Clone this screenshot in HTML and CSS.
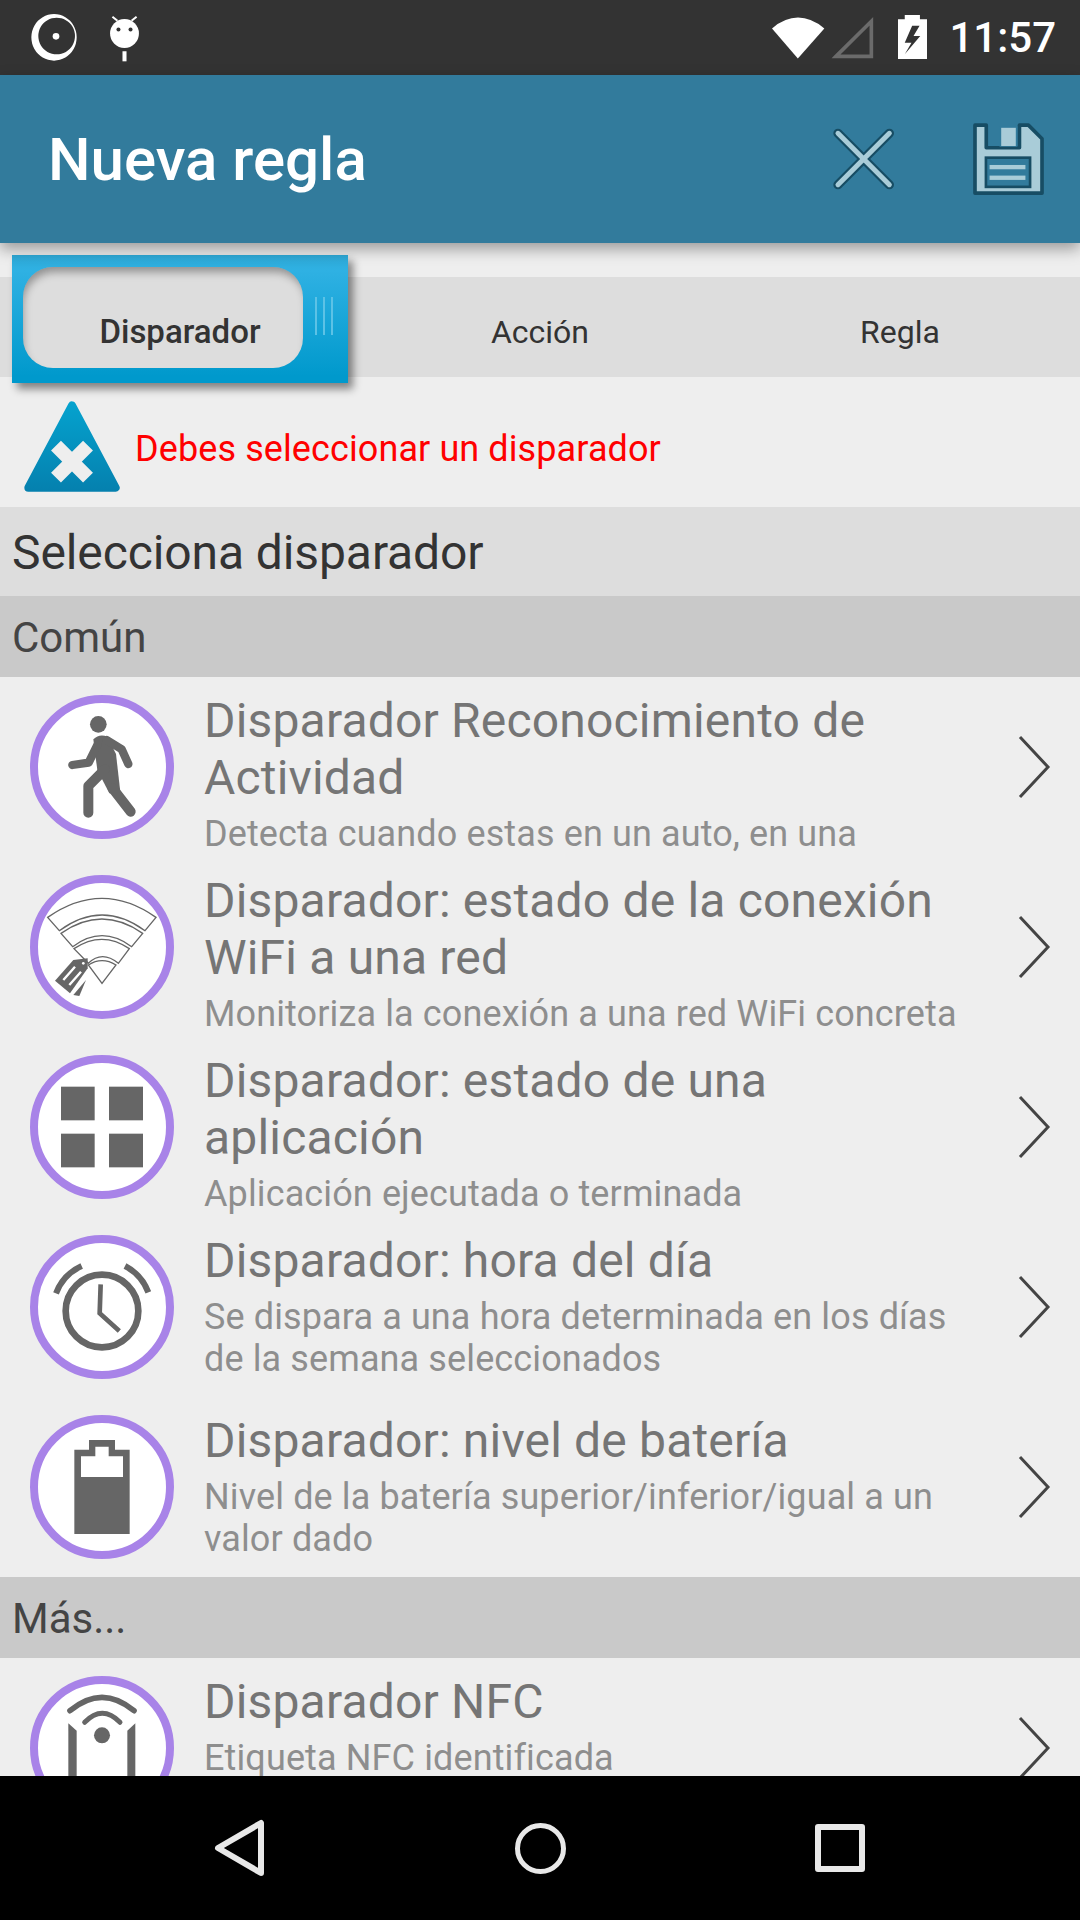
FILE: index.html
```html
<!DOCTYPE html>
<html lang="es">
<head>
  <meta charset="UTF-8">
  <meta name="viewport" content="width=device-width, initial-scale=1.0">
  <title>Nueva regla</title>
  <link rel="stylesheet" href="styles.css">
</head>
<body>
<div class="phone">

  <div class="status-bar">
    <svg class="st-ring" viewBox="88 43 138 141"><path fill="#fff" fill-rule="evenodd" d="M157 43a68 70 0 1 0 .1 0zM165 54a55 55 0 1 1-.1 0z"/><circle cx="163" cy="110" r="10" fill="#fff"/></svg>
    <svg class="st-bug" viewBox="320 45 92 140"><ellipse cx="366" cy="100" rx="43" ry="43" fill="#fff"/><path d="M330 50l15 12M402 50l-15 12" stroke="#fff" stroke-width="6"/><circle cx="348" cy="88" r="6" fill="#333"/><circle cx="384" cy="88" r="6" fill="#333"/><rect x="360" y="153" width="12" height="30" fill="#fff"/></svg>
    <div class="spacer"></div>
    <svg class="st-wifi" viewBox="220 45 160 132"><path fill="#fff" d="M220 85Q298 20 378 85L298 176Z"/></svg>
    <svg class="st-signal" viewBox="395 50 130 128"><path fill="none" stroke="#6b6b6b" stroke-width="11" d="M410 171L517 65V171Z"/></svg>
    <svg class="st-batt" viewBox="598 46 86 130"><path fill="#fff" d="M598 58H618V46H663V58H684V176H598Z"/><path fill="#333" d="M640 78L618 128H638L618 162L664 108H644L662 78Z"/></svg>
    <span class="st-time">11:57</span>
  </div>

  <div class="app-bar">
    <h1 class="app-title">Nueva regla</h1>
    <svg class="btn-close" viewBox="400 385 190 185"><path d="M415 400L570 555M570 400L415 555" stroke="#174d64" stroke-width="28" stroke-linecap="round"/><path d="M415 400L570 555M570 400L415 555" stroke="#a9ccd8" stroke-width="15" stroke-linecap="round"/></svg>
    <svg class="btn-save" viewBox="815 368 220 222"><path fill="#a9ccd8" stroke="#174d64" stroke-width="11" stroke-linejoin="round" d="M824 377H858V445H958V377H985L1026 418V582H824Z"/><rect x="898" y="380" width="54" height="62" fill="#327b9c"/><rect x="903" y="385" width="44" height="55" fill="#a9ccd8"/><rect x="857" y="475" width="133" height="88" fill="#327b9c" stroke="#174d64" stroke-width="8"/><rect x="868" y="497" width="108" height="13" fill="#a9ccd8"/><rect x="868" y="529" width="108" height="13" fill="#a9ccd8"/></svg>
  </div>

  <div class="content">
    <div class="tabs-gap"></div>
    <div class="tabs">
      <div class="tab active">
        <div class="tab-skin">
          <div class="tab-hole"></div>
          <div class="tab-grip"></div>
        </div>
        <span>Disparador</span>
      </div>
      <div class="tab"><span>Acción</span></div>
      <div class="tab"><span>Regla</span></div>
    </div>

    <div class="warning">
      <svg class="warn-icon" viewBox="72 485 288 273">
        <defs><linearGradient id="warnFill" gradientUnits="userSpaceOnUse" x1="0" y1="485" x2="0" y2="758"><stop offset="0" stop-color="#05a3cf"/><stop offset="1" stop-color="#0580ae"/></linearGradient></defs>
        <path fill="url(#warnFill)" stroke="url(#warnFill)" stroke-width="24" stroke-linejoin="round" d="M216 498L347 745H85Z"/>
        <path stroke="#eee" stroke-width="42" d="M168 619L264 715M264 619L168 715"/>
      </svg>
      <span>Debes seleccionar un disparador</span>
    </div>

    <div class="page-head">Selecciona disparador</div>

    <div class="group">Común</div>

    <div class="row">
      <div class="badge">
        <svg viewBox="84 69 384 384" fill="#666">
          <circle cx="265" cy="133" r="25"/>
          <path d="M250 178Q268 160 292 170L318 222L332 345L298 340L262 270L256 225Z"/>
          <path fill="none" stroke="#666" stroke-width="30" stroke-linecap="round" stroke-linejoin="round" d="M235 398V318L285 268M308 325L362 395"/>
          <path fill="none" stroke="#666" stroke-width="25" stroke-linecap="round" stroke-linejoin="round" d="M187 255L236 248L262 195M290 180L335 208L355 252"/>
        </svg>
      </div>
      <div class="row-text">
        <div class="row-title">Disparador Reconocimiento de Actividad</div>
        <div class="row-sub">Detecta cuando estas en un auto, en una</div>
      </div>
      <svg class="chevron" viewBox="0 0 34 66"><path d="M3 3L31 33L3 63"/></svg>
    </div>

    <div class="row">
      <div class="badge">
        <svg viewBox="84 609 384 384" fill="none" stroke="#666" stroke-width="4">
          <path d="M113 712Q276 598 438 712L405 752Q276 658 148 752Z"/>
          <path d="M153 760Q276 674 398 760L365 800Q276 734 188 800Z"/>
          <path d="M192 806Q276 750 358 806L325 850Q276 810 235 850Z"/>
          <path d="M235 855Q276 829 318 855L276 910Z"/>
          <path fill="#666" stroke="none" d="M135 902L190 840L233 835V865L180 940Z"/>
          <path fill="#666" stroke="none" d="M190 945L228 900L208 948Z"/>
          <path stroke="#fff" stroke-width="7" d="M160 900L195 860M178 915L213 875"/>
          <circle cx="220" cy="850" r="4" fill="#fff" stroke="none"/>
        </svg>
      </div>
      <div class="row-text">
        <div class="row-title">Disparador: estado de la conexión WiFi a una red</div>
        <div class="row-sub">Monitoriza la conexión a una red WiFi concreta</div>
      </div>
      <svg class="chevron" viewBox="0 0 34 66"><path d="M3 3L31 33L3 63"/></svg>
    </div>

    <div class="row">
      <div class="badge">
        <svg viewBox="84 69 384 384" fill="#666">
          <rect x="153" y="140" width="101" height="101"/>
          <rect x="297" y="140" width="102" height="101"/>
          <rect x="153" y="281" width="101" height="101"/>
          <rect x="297" y="281" width="102" height="101"/>
        </svg>
      </div>
      <div class="row-text">
        <div class="row-title">Disparador: estado de una aplicación</div>
        <div class="row-sub">Aplicación ejecutada o terminada</div>
      </div>
      <svg class="chevron" viewBox="0 0 34 66"><path d="M3 3L31 33L3 63"/></svg>
    </div>

    <div class="row">
      <div class="badge">
        <svg viewBox="84 609 384 384" fill="none" stroke="#666">
          <circle cx="276" cy="813" r="109" stroke-width="20"/>
          <path stroke-width="14" d="M272 733L269 820L328 873"/>
          <path stroke-width="18" d="M138 760A148 148 0 0 1 215 678M345 678A148 148 0 0 1 415 757"/>
        </svg>
      </div>
      <div class="row-text">
        <div class="row-title">Disparador: hora del día</div>
        <div class="row-sub">Se dispara a una hora determinada en los días de la semana seleccionados</div>
      </div>
      <svg class="chevron" viewBox="0 0 34 66"><path d="M3 3L31 33L3 63"/></svg>
    </div>

    <div class="row">
      <div class="badge">
        <svg viewBox="84 69 384 384">
          <path fill="#666" d="M193 149H237V120H315V149H359V402H193Z"/>
          <path fill="#fff" d="M213 231V169H256V140H296V169H339V231Z"/>
        </svg>
      </div>
      <div class="row-text">
        <div class="row-title">Disparador: nivel de batería</div>
        <div class="row-sub">Nivel de la batería superior/inferior/igual a un valor dado</div>
      </div>
      <svg class="chevron" viewBox="0 0 34 66"><path d="M3 3L31 33L3 63"/></svg>
    </div>

    <div class="group">Más...</div>

    <div class="row">
      <div class="badge">
        <svg viewBox="84 72 384 384" fill="#666">
          <path fill="none" stroke="#666" stroke-width="17" stroke-linecap="round" d="M180 152Q276 72 372 152"/>
          <path fill="none" stroke="#666" stroke-width="15" stroke-linecap="round" d="M224 187Q277 133 330 187"/>
          <circle cx="276" cy="226" r="24"/>
          <path d="M175 190L200 212V440H175Z"/>
          <path d="M376 190L352 212V440H376Z"/>
        </svg>
      </div>
      <div class="row-text">
        <div class="row-title">Disparador NFC</div>
        <div class="row-sub">Etiqueta NFC identificada</div>
      </div>
      <svg class="chevron" viewBox="0 0 34 66"><path d="M3 3L31 33L3 63"/></svg>
    </div>
  </div>

  <div class="nav-bar">
    <svg class="nav-back" viewBox="0 0 52 58"><path d="M47 4V54L4 29Z"/></svg>
    <div class="nav-home"></div>
    <div class="nav-recent"></div>
  </div>

</div>
</body>
</html>
```

FILE: styles.css
```css
* {
  box-sizing: border-box;
}
html, body {
  margin: 0;
  padding: 0;
}
body {
  font-family: Roboto, "Noto Sans", sans-serif;
  background: #eee;
}
.phone {
  width: 1080px;
  height: 1920px;
  display: flex;
  flex-direction: column;
  overflow: hidden;
}
.spacer {
  flex: 1;
}

/* status bar */
.status-bar {
  height: 75px;
  flex: none;
  background: #333;
  display: flex;
  align-items: flex-start;
  padding: 0 24px 0 31px;
  color: #fff;
}
.st-ring {
  width: 46px;
  height: 47px;
  margin-top: 14px;
}
.st-bug {
  width: 31px;
  height: 47px;
  margin: 15px 0 0 32px;
}
.st-wifi {
  width: 53px;
  height: 44px;
  margin-top: 15px;
}
.st-signal {
  width: 43px;
  height: 43px;
  margin: 16px 0 0 6px;
}
.st-batt {
  width: 29px;
  height: 44px;
  margin: 15px 0 0 24px;
}
.st-time {
  font-size: 42px;
  font-weight: 500;
  line-height: 75px;
  margin-left: 22px;
}

/* app bar */
.app-bar {
  height: 168px;
  flex: none;
  background: #327b9c;
  display: flex;
  align-items: center;
  padding: 0 35px 0 48px;
  box-shadow: 0 6px 14px rgba(0, 0, 0, 0.35);
  position: relative;
  z-index: 3;
}
.app-title {
  flex: 1;
  margin: 0;
  color: #fff;
  font-size: 60px;
  font-weight: 500;
}
.btn-close {
  width: 63px;
  height: 62px;
}
.btn-save {
  width: 73px;
  height: 74px;
  margin-left: 76px;
}

.content {
  flex: 1;
  min-height: 0;
  overflow: hidden;
}

/* tabs */
.tabs-gap {
  height: 34px;
}
.tabs {
  height: 100px;
  background: #ddd;
  display: grid;
  grid-template-columns: repeat(3, 1fr);
  position: relative;
  z-index: 2;
}
.tab {
  position: relative;
  display: flex;
  align-items: center;
  justify-content: center;
  padding-top: 9px;
  font-size: 32px;
  color: #333;
}
.tab span {
  position: relative;
}
.tab.active {
  font-size: 33px;
  font-weight: 500;
}
.tab-skin {
  position: absolute;
  left: 12px;
  top: -22px;
  width: 336px;
  height: 128px;
  background: linear-gradient(#2ea9d6, #2fb1e3 12%, #0099cc 95%);
  box-shadow: 5px 6px 8px rgba(0, 0, 0, 0.45);
}
.tab-hole {
  position: absolute;
  left: 11px;
  top: 12px;
  width: 280px;
  height: 101px;
  border-radius: 30px;
  background: #ddd;
  box-shadow: inset 2px 7px 8px -2px rgba(0, 0, 0, 0.35);
}
.tab-grip {
  position: absolute;
  left: 303px;
  top: 42px;
  width: 20px;
  height: 38px;
  background: repeating-linear-gradient(90deg, #5cc2e6 0 2px, transparent 2px 8px);
}

/* warning */
.warning {
  height: 130px;
  display: flex;
  align-items: center;
  padding: 14px 0 0 24px;
  color: #f00;
  font-size: 36px;
  letter-spacing: 0.1px;
}
.warn-icon {
  width: 96px;
  height: 91px;
  margin: -6px 15px 0 0;
}

/* section headers */
.page-head {
  height: 89px;
  background: #ddd;
  color: #333;
  font-size: 48px;
  letter-spacing: -0.1px;
  line-height: 91px;
  padding-left: 12px;
}
.group {
  height: 81px;
  background: #c9c9c9;
  color: #444;
  font-size: 42px;
  line-height: 83px;
  padding-left: 12px;
}

/* list rows */
.row {
  height: 180px;
  display: grid;
  grid-template-columns: 144px 1fr 34px;
  align-items: center;
  column-gap: 30px;
  padding: 0 28px 0 30px;
}
.badge {
  width: 144px;
  height: 144px;
  border: 8px solid #a883e8;
  border-radius: 50%;
  background: #fff;
  overflow: hidden;
}
.badge svg {
  display: block;
  width: 128px;
  height: 128px;
}
.row-text {
  align-self: start;
  padding-top: 15px;
}
.row-title {
  font-size: 48px;
  letter-spacing: 0.18px;
  line-height: 57px;
  color: #757575;
}
.row-sub {
  margin-top: 7px;
  font-size: 36px;
  letter-spacing: 0.12px;
  line-height: 42px;
  color: #8e8e8e;
}
.chevron {
  width: 34px;
  height: 66px;
  margin-left: -1px;
  fill: none;
  stroke: #444;
  stroke-width: 3;
}

/* nav bar */
.nav-bar {
  height: 144px;
  flex: none;
  background: #000;
  display: flex;
  align-items: center;
  justify-content: center;
  padding-right: 2px;
  position: relative;
}
.nav-back {
  width: 52px;
  height: 58px;
  fill: none;
  stroke: #e8e8e8;
  stroke-width: 6;
  stroke-linejoin: round;
}
.nav-home {
  width: 51px;
  height: 51px;
  border: 5px solid #e8e8e8;
  border-radius: 50%;
  margin: 0 249px 0 249px;
}
.nav-recent {
  width: 50px;
  height: 48px;
  border: 6px solid #e8e8e8;
  border-radius: 3px;
}
```
